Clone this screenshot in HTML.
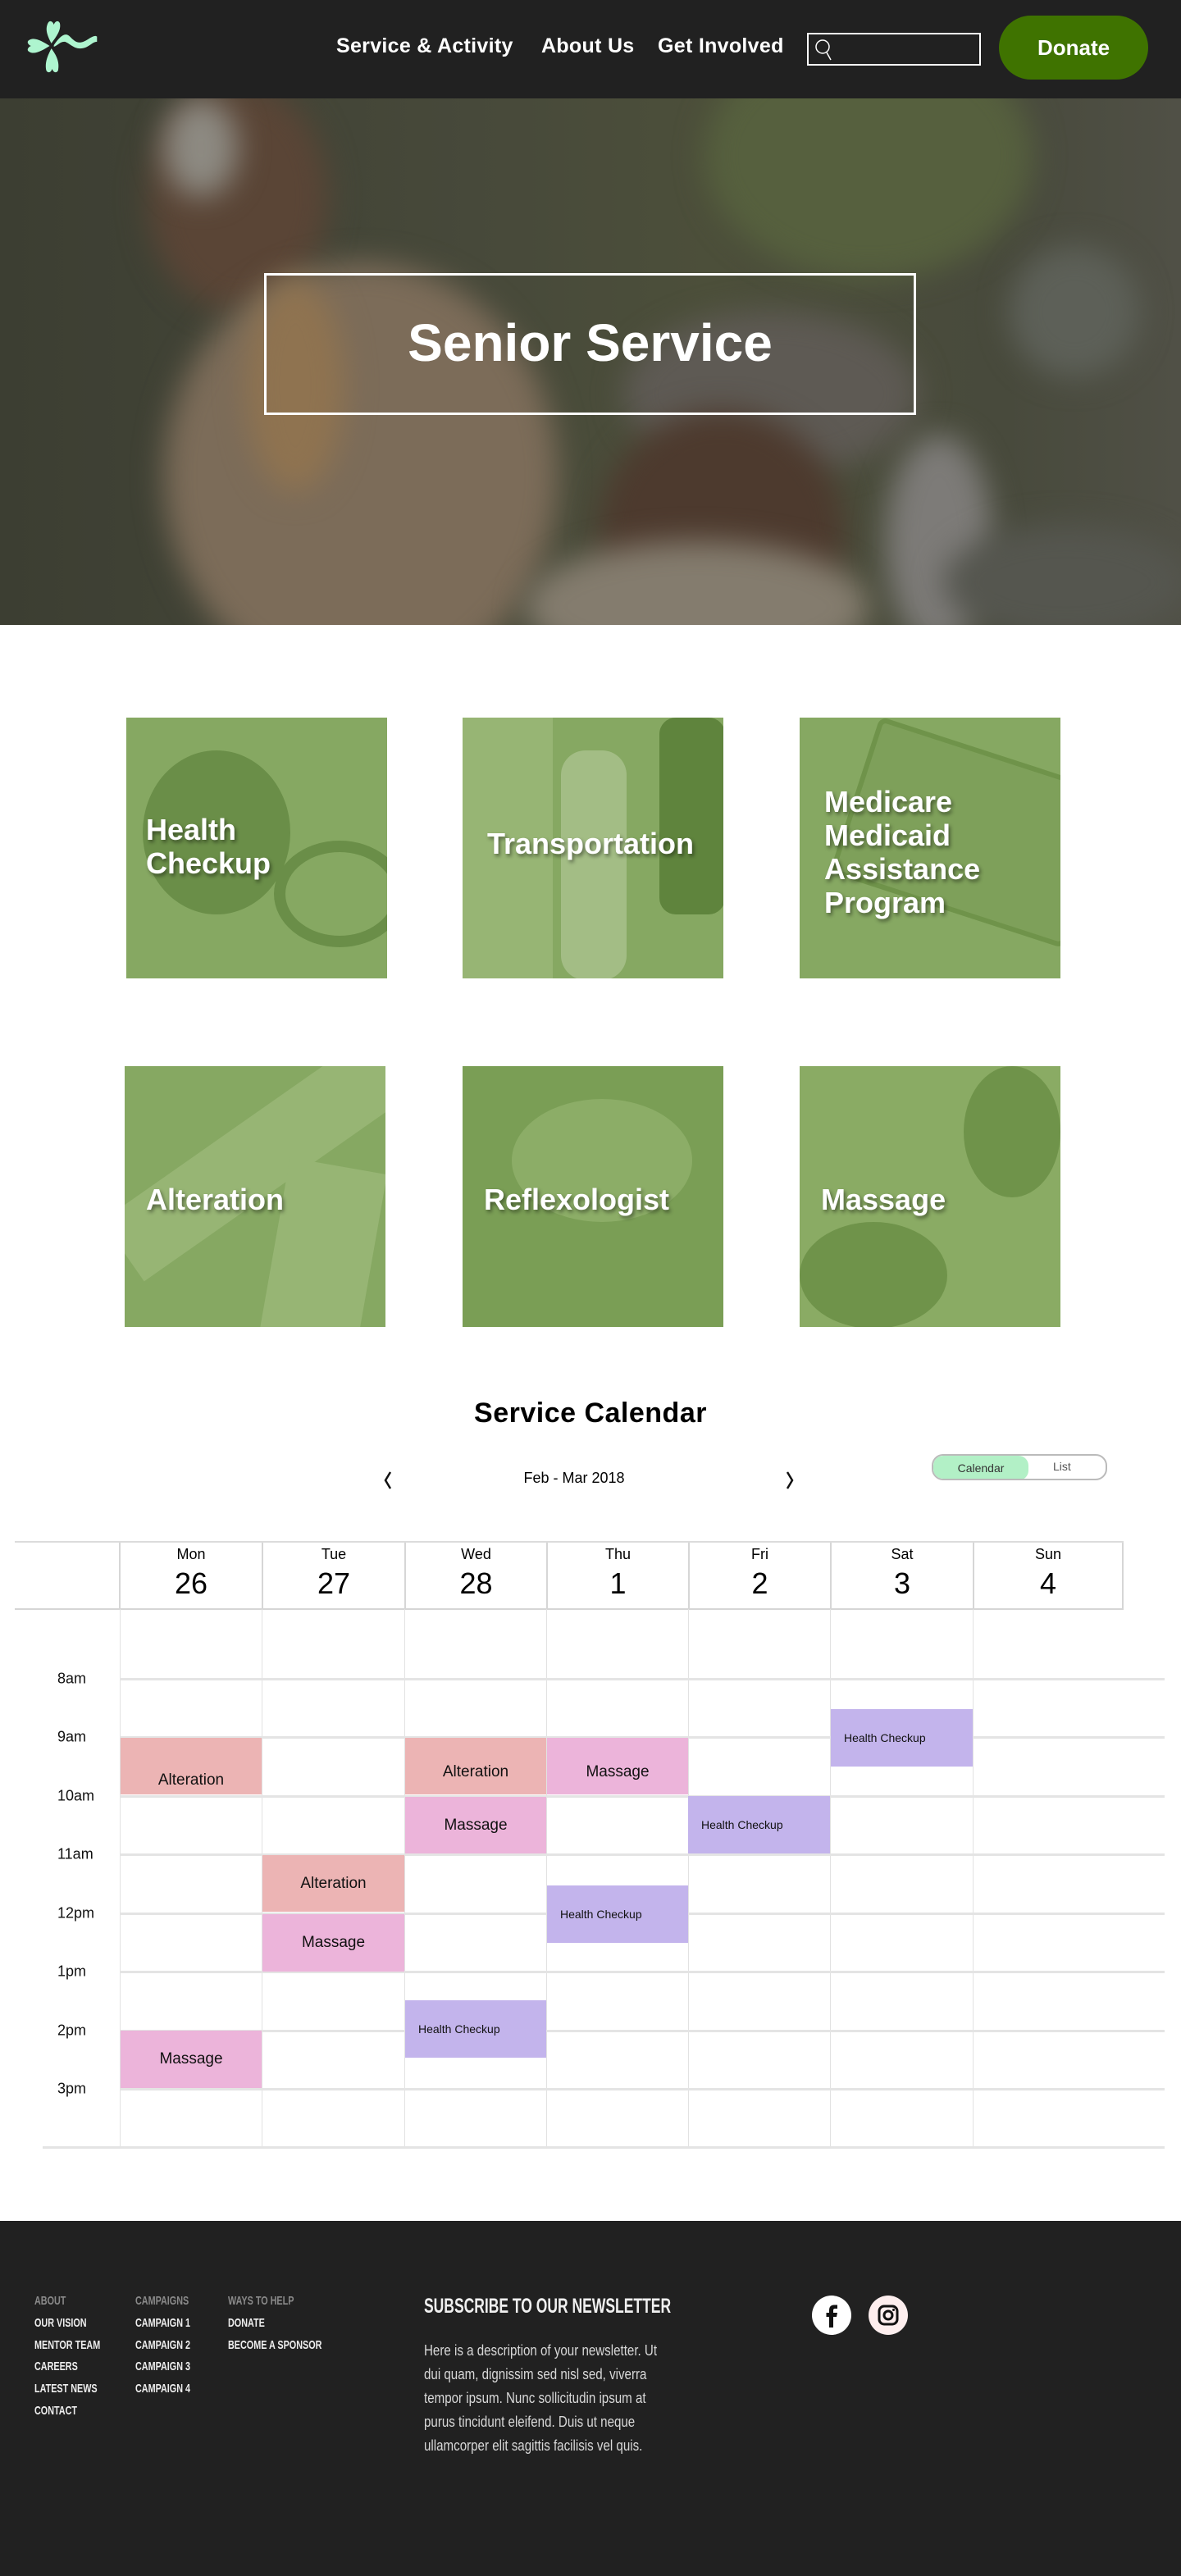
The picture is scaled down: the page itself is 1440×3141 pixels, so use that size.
<!DOCTYPE html>
<html><head><meta charset="utf-8"><style>
*{margin:0;padding:0;box-sizing:border-box}
body{width:1440px;height:3141px;background:#fff;font-family:"Liberation Sans",Arial,sans-serif;position:relative;overflow:hidden}
.abs{position:absolute}
header{position:absolute;left:0;top:0;width:1440px;height:120px;background:#212121}
.nav{position:absolute;top:42px;color:#fff;font-size:25px;font-weight:bold;letter-spacing:.3px}
.search{position:absolute;left:984px;top:40px;width:212px;height:40px;border:2px solid #fff}
.donate{position:absolute;left:1218px;top:19px;width:182px;height:78px;background:#3f7300;border-radius:40px;color:#fff;font-weight:bold;font-size:26px;text-align:center;line-height:78px}
.hero{position:absolute;left:0;top:120px;width:1440px;height:642px;overflow:hidden;
background:linear-gradient(90deg,#3c3e32 0%,#47493a 40%,#4c4f3a 60%,#484a3c 85%,#505046 100%)}
.hero .b{position:absolute;border-radius:50%;filter:blur(18px)}
.box{position:absolute;left:322px;top:333px;width:795px;height:173px;border:3px solid #fff;color:#fff;font-size:64px;font-weight:bold;text-align:center;line-height:165px}
.tile{position:absolute;width:318px;height:318px;background:#86a862;overflow:hidden}
.tile .s{position:absolute;background:#6f934a;border-radius:50%}
.tile span{position:absolute;color:#fff;font-weight:bold;font-size:36px;line-height:41px;text-shadow:2px 3px 5px rgba(0,0,0,.45)}
.vl{position:absolute;width:1px;background:#e2e2e2}
.hl{position:absolute;height:3px;background:#e4e4e4}
.tl{position:absolute;left:70px;font-size:18px;color:#111;transform:translateY(-50%)}
.ev{position:absolute;color:#111;display:flex;align-items:center;justify-content:center;font-size:19px}
.alt{background:#ecb4b4}.mas{background:#ecb4da}.hc{background:#c3b4ec;justify-content:flex-start;padding-left:16px;font-size:14px}
.dh{position:absolute;top:1881px;height:81px;text-align:center;border-left:2px solid #d6d6d6}
.dh .d{font-size:18px;margin-top:4px}.dh .n{font-size:36px;margin-top:4px}
footer{position:absolute;left:0;top:2708px;width:1440px;height:433px;background:#212121}
.c{position:absolute;transform:scaleX(.72);transform-origin:0 0;white-space:nowrap}
.fh{top:2797px;color:#8a8a8a;font-size:15px;font-weight:bold}
.fl{color:#eee;font-size:15px;font-weight:bold;line-height:26.7px}
.np{color:#d8d8d8;font-size:18px;line-height:29px;transform:scaleX(.84)}
</style></head><body>
<header>
<svg class="abs" style="left:22px;top:24px" width="108" height="66" viewBox="0 0 86 64">
<g fill="#aef5cf">
<path d="M30 28 C26 20 22 12 26 4 C28 0 32 2 33 6 C34 2 38 0 40 4 C42 12 36 20 30 28Z"/>
<path d="M30 34 C26 42 22 50 24 60 C26 64 30 62 31 58 C32 62 36 64 38 60 C40 50 36 42 30 34Z"/>
<path d="M28 31 C20 26 10 20 4 24 C0 26 3 30 6 31 C3 32 0 36 4 38 C10 42 20 36 28 31Z"/>
<path d="M33 30 C40 20 46 14 52 20 C58 26 62 30 72 24 C78 20 82 18 84 20 L84 26 C78 26 74 34 64 34 C56 34 52 28 46 26 C40 26 38 30 33 32Z"/>
</g></svg>
<div class="nav" style="left:410px">Service &amp; Activity</div>
<div class="nav" style="left:660px">About Us</div>
<div class="nav" style="left:802px">Get Involved</div>
<div class="search"><svg width="40" height="36" viewBox="0 0 40 36"><circle cx="17" cy="15" r="8" fill="none" stroke="#fff" stroke-width="1.5"/><line x1="22" y1="22" x2="27" y2="31" stroke="#fff" stroke-width="1.5"/></svg></div>
<div class="donate">Donate</div>
</header>
<div class="hero">
<div class="b" style="left:860px;top:-80px;width:400px;height:300px;background:#56603e"></div>
<div class="b" style="left:180px;top:-20px;width:220px;height:280px;background:#5a4536"></div>
<div class="b" style="left:200px;top:0px;width:90px;height:120px;background:#8d8a82"></div>
<div class="b" style="left:200px;top:200px;width:480px;height:520px;background:#7c6c59"></div>
<div class="b" style="left:300px;top:220px;width:120px;height:260px;background:#8f7350"></div>
<div class="b" style="left:760px;top:260px;width:360px;height:200px;background:#5e5a54"></div>
<div class="b" style="left:730px;top:380px;width:300px;height:300px;background:#4d3a2e"></div>
<div class="b" style="left:640px;top:540px;width:420px;height:160px;background:#847c6e"></div>
<div class="b" style="left:1080px;top:410px;width:130px;height:260px;background:#7d7b78"></div>
<div class="b" style="left:1230px;top:180px;width:160px;height:160px;background:#5d6058"></div>
<div class="b" style="left:1150px;top:520px;width:300px;height:140px;background:#55564f"></div>
</div>
<div class="box">Senior Service</div>

<div class="tile" style="left:154px;top:875px"><div class="s" style="left:20px;top:40px;width:180px;height:200px;background:#6a8e48"></div><div class="s" style="left:180px;top:150px;width:160px;height:130px;background:transparent;border:14px solid #6a8e48"></div><span style="left:24px;top:116px">Health<br>Checkup</span></div>
<div class="tile" style="left:564px;top:875px"><div class="s" style="left:0;top:0;width:110px;height:318px;border-radius:0;background:#97b574"></div><div class="s" style="left:120px;top:40px;width:80px;height:280px;border-radius:30px;background:#a3bd85"></div><div class="s" style="left:240px;top:0;width:80px;height:240px;border-radius:20px;background:#5f843d"></div><span style="left:30px;top:133px">Transportation</span></div>
<div class="tile" style="left:975px;top:875px"><div class="s" style="left:60px;top:40px;width:300px;height:200px;border-radius:10px;background:#7ea05a;transform:rotate(18deg);border:6px solid #6f934a"></div><span style="left:30px;top:82px">Medicare<br>Medicaid<br>Assistance<br>Program</span></div>
<div class="tile" style="left:152px;top:1300px"><div class="s" style="left:-40px;top:60px;width:420px;height:90px;border-radius:0;background:#97b574;transform:rotate(-35deg)"></div><div class="s" style="left:180px;top:120px;width:120px;height:240px;border-radius:0;background:#97b574;transform:rotate(10deg)"></div><span style="left:26px;top:142px">Alteration</span></div>
<div class="tile" style="left:564px;top:1300px;background:#7a9e55"><div class="s" style="left:60px;top:40px;width:220px;height:150px;background:#8cad67"></div><span style="left:26px;top:142px">Reflexologist</span></div>
<div class="tile" style="left:975px;top:1300px;background:#8aab64"><div class="s" style="left:200px;top:0;width:118px;height:160px;background:#6f934a"></div><div class="s" style="left:0;top:190px;width:180px;height:130px;background:#6f934a"></div><span style="left:26px;top:142px">Massage</span></div>

<div class="abs" style="left:0;top:1704px;width:1440px;text-align:center;font-size:34px;font-weight:bold;letter-spacing:.5px">Service Calendar</div>
<svg class="abs" style="left:465px;top:1792px" width="16" height="26" viewBox="0 0 16 26"><path d="M11 3 L5 13 L11 23" fill="none" stroke="#111" stroke-width="2.5"/></svg>
<svg class="abs" style="left:955px;top:1792px" width="16" height="26" viewBox="0 0 16 26"><path d="M5 3 L11 13 L5 23" fill="none" stroke="#111" stroke-width="2.5"/></svg>
<div class="abs" style="left:600px;top:1792px;width:200px;text-align:center;font-size:18px">Feb - Mar 2018</div>
<div class="abs" style="left:1136px;top:1773px;width:214px;height:32px;border:2px solid #bbb;border-radius:14px;overflow:hidden">
<div class="abs" style="left:0;top:0;width:116px;height:30px;background:#b2f0c6;border-radius:12px;font-size:14px;color:#333;text-align:center;line-height:30px">Calendar</div>
<div class="abs" style="left:146px;top:0;font-size:14px;color:#555;line-height:26px">List</div></div>

<div class="abs" style="left:18px;top:1879px;width:1352px;height:2px;background:#dcdcdc"></div>
<div class="abs" style="left:18px;top:1961px;width:1352px;height:2px;background:#d6d6d6"></div>
<div class="dh" style="left:145px;width:174px"><div class="d">Mon</div><div class="n">26</div></div>
<div class="dh" style="left:319px;width:174px"><div class="d">Tue</div><div class="n">27</div></div>
<div class="dh" style="left:493px;width:173px"><div class="d">Wed</div><div class="n">28</div></div>
<div class="dh" style="left:666px;width:173px"><div class="d">Thu</div><div class="n">1</div></div>
<div class="dh" style="left:839px;width:173px"><div class="d">Fri</div><div class="n">2</div></div>
<div class="dh" style="left:1012px;width:174px"><div class="d">Sat</div><div class="n">3</div></div>
<div class="dh" style="left:1186px;width:184px;border-right:2px solid #d6d6d6"><div class="d">Sun</div><div class="n">4</div></div>

<div class="vl" style="left:146px;top:1962px;height:656px"></div>
<div class="vl" style="left:319px;top:1962px;height:656px"></div>
<div class="vl" style="left:493px;top:1962px;height:656px"></div>
<div class="vl" style="left:666px;top:1962px;height:656px"></div>
<div class="vl" style="left:839px;top:1962px;height:656px"></div>
<div class="vl" style="left:1012px;top:1962px;height:656px"></div>
<div class="vl" style="left:1186px;top:1962px;height:656px"></div>
<div class="hl" style="left:146px;top:2046px;width:1274px"></div>
<div class="hl" style="left:146px;top:2117px;width:1274px"></div>
<div class="hl" style="left:146px;top:2189px;width:1274px"></div>
<div class="hl" style="left:146px;top:2260px;width:1274px"></div>
<div class="hl" style="left:146px;top:2332px;width:1274px"></div>
<div class="hl" style="left:146px;top:2403px;width:1274px"></div>
<div class="hl" style="left:146px;top:2475px;width:1274px"></div>
<div class="hl" style="left:146px;top:2546px;width:1274px"></div>
<div class="hl" style="left:52px;top:2617px;width:1368px"></div>
<div class="tl" style="top:2047px">8am</div>
<div class="tl" style="top:2118px">9am</div>
<div class="tl" style="top:2190px">10am</div>
<div class="tl" style="top:2261px">11am</div>
<div class="tl" style="top:2333px">12pm</div>
<div class="tl" style="top:2404px">1pm</div>
<div class="tl" style="top:2476px">2pm</div>
<div class="tl" style="top:2547px">3pm</div>

<div class="ev alt" style="left:147px;top:2119px;width:172px;height:69px;padding-top:34px">Alteration</div>
<div class="ev alt" style="left:494px;top:2119px;width:172px;height:69px;padding-top:14px">Alteration</div>
<div class="ev mas" style="left:667px;top:2119px;width:172px;height:69px;padding-top:14px">Massage</div>
<div class="ev mas" style="left:494px;top:2191px;width:172px;height:69px">Massage</div>
<div class="ev hc" style="left:1013px;top:2084px;width:173px;height:70px">Health Checkup</div>
<div class="ev hc" style="left:839px;top:2190px;width:173px;height:70px">Health Checkup</div>
<div class="ev alt" style="left:320px;top:2262px;width:173px;height:69px">Alteration</div>
<div class="ev mas" style="left:320px;top:2334px;width:173px;height:70px">Massage</div>
<div class="ev hc" style="left:667px;top:2299px;width:172px;height:70px">Health Checkup</div>
<div class="ev hc" style="left:494px;top:2439px;width:172px;height:70px">Health Checkup</div>
<div class="ev mas" style="left:147px;top:2476px;width:172px;height:70px">Massage</div>

<footer></footer>
<div class="c fh" style="left:42px">ABOUT</div>
<div class="c fh" style="left:165px">CAMPAIGNS</div>
<div class="c fh" style="left:278px">WAYS TO HELP</div>
<div class="c fl" style="left:42px;top:2820px">OUR VISION<br>MENTOR TEAM<br>CAREERS<br>LATEST NEWS<br>CONTACT</div>
<div class="c fl" style="left:165px;top:2820px">CAMPAIGN 1<br>CAMPAIGN 2<br>CAMPAIGN 3<br>CAMPAIGN 4</div>
<div class="c fl" style="left:278px;top:2820px">DONATE<br>BECOME A SPONSOR</div>
<div class="c" style="left:517px;top:2798px;color:#f0f0f0;font-size:25px;font-weight:bold;transform:scaleX(.7)">SUBSCRIBE TO OUR NEWSLETTER</div>
<div class="c np" style="left:517px;top:2852px">Here is a description of your newsletter. Ut<br>dui quam, dignissim sed nisl sed, viverra<br>tempor ipsum. Nunc sollicitudin ipsum at<br>purus tincidunt eleifend. Duis ut neque<br>ullamcorper elit sagittis facilisis vel quis.</div>
<svg class="abs" style="left:989px;top:2798px" width="50" height="50" viewBox="0 0 50 50"><circle cx="25" cy="25" r="24" fill="#fff"/><path d="M27 40 V27 H31 L32 22 H27 V19 C27 17.5 28 17 29.5 17 H32 V12.5 H28 C24 12.5 22 15 22 19 V22 H18.5 V27 H22 V40Z" fill="#111"/></svg>
<svg class="abs" style="left:1058px;top:2798px" width="50" height="50" viewBox="0 0 50 50"><circle cx="25" cy="25" r="24" fill="#fdeeee"/><rect x="14" y="14" width="22" height="22" rx="6" fill="none" stroke="#111" stroke-width="3"/><circle cx="25" cy="25" r="5" fill="none" stroke="#111" stroke-width="3"/><circle cx="31.5" cy="18.5" r="1.5" fill="#111"/></svg>
</body></html>
